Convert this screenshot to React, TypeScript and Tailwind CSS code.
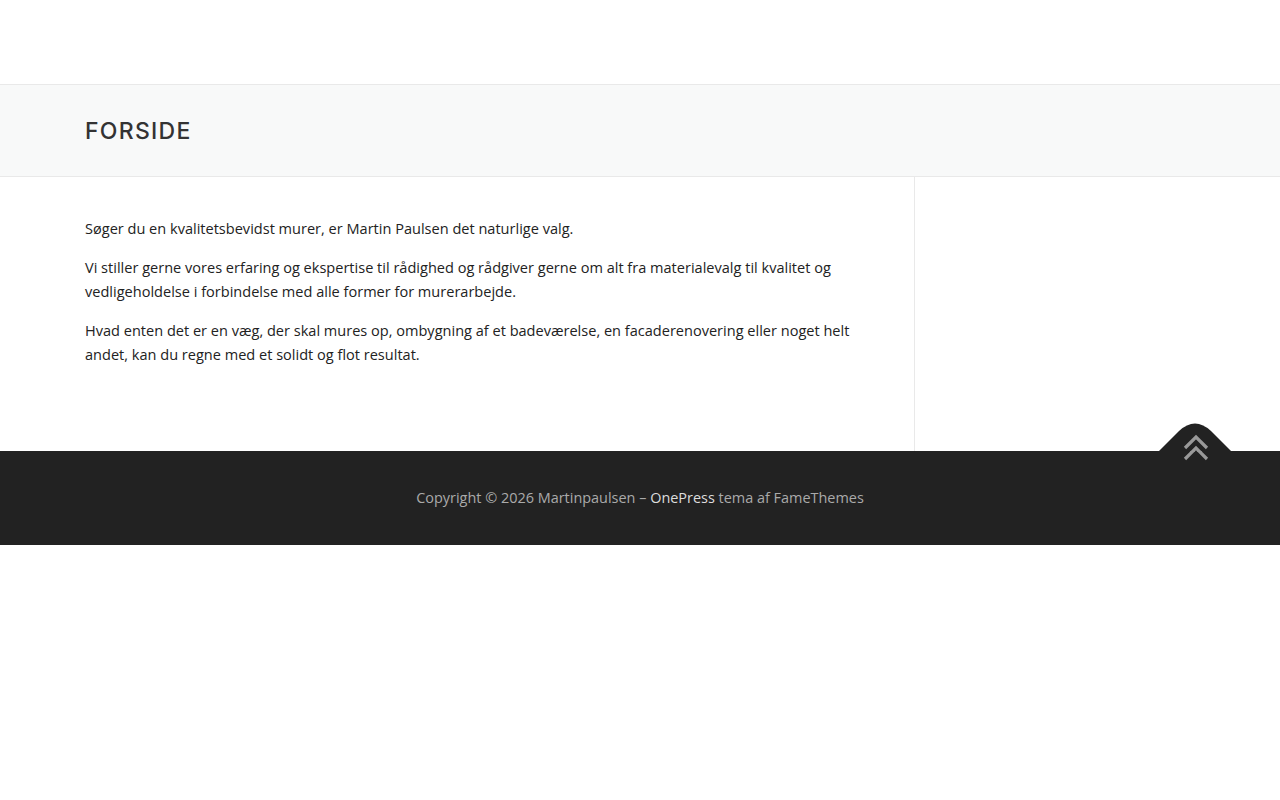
import React from "react";

export default function App() {
  return (
    <div className="min-h-[800px] bg-white text-[14.55px] text-[#222]" style={{ fontFamily: '"Open Sans", "Noto Sans", sans-serif' }}>
      <header className="h-[85px] border-b border-[#e9e9e9] bg-white" />
      <div className="h-[92px] border-b border-[#e9e9e9] bg-[#f8f9f9]">
        <div className="mx-auto flex h-full w-[1110px] items-center">
          <h1
            className="pt-[1px] text-[23px] font-medium uppercase tracking-[0.055em] text-[#333]"
            style={{ fontFamily: 'Inter, "Open Sans", sans-serif' }}
          >
            Forside
          </h1>
        </div>
      </div>
      <div className="mx-auto flex w-[1110px]">
        <main className="w-[830px] border-r border-[#e9e9e9] pb-[70px] pr-[30px] pt-[39px] leading-[24px]">
          <p className="mb-[15px]">Søger du en kvalitetsbevidst murer, er Martin Paulsen det naturlige valg.</p>
          <p className="mb-[15px]">
            Vi stiller gerne vores erfaring og ekspertise til rådighed og rådgiver gerne om alt fra materialevalg til kvalitet og vedligeholdelse i forbindelse med alle former for murerarbejde.
          </p>
          <p className="mb-[15px]">
            Hvad enten det er en væg, der skal mures op, ombygning af et badeværelse, en facaderenovering eller noget helt andet, kan du regne med et solidt og flot resultat.
          </p>
        </main>
        <aside className="flex-1" />
      </div>
      <footer className="relative flex h-[94px] items-center justify-center bg-[#222] text-[14.45px] text-[#aaa]">
        <p>
          Copyright © 2026 Martinpaulsen – <span className="text-[#ddd]">OnePress</span> tema af FameThemes
        </p>
        <svg className="absolute right-[48px] top-[-28px]" width="74" height="29" viewBox="0 0 74 29">
          <path d="M0 29 L21 8 Q37 -7 53 8 L74 29 Z" fill="#222" />
          <polyline points="27,25 38,14 49,25" fill="none" stroke="#999" strokeWidth="3.2" />
          <polyline points="27,36 38,25 49,36" fill="none" stroke="#999" strokeWidth="3.2" />
        </svg>
        <svg className="absolute right-[48px] top-0" width="74" height="12" viewBox="0 0 74 12">
          <polyline points="27,-3 38,-14 49,-3" fill="none" stroke="#999" strokeWidth="3.2" />
          <polyline points="27,8 38,-3 49,8" fill="none" stroke="#999" strokeWidth="3.2" />
        </svg>
      </footer>
    </div>
  );
}
